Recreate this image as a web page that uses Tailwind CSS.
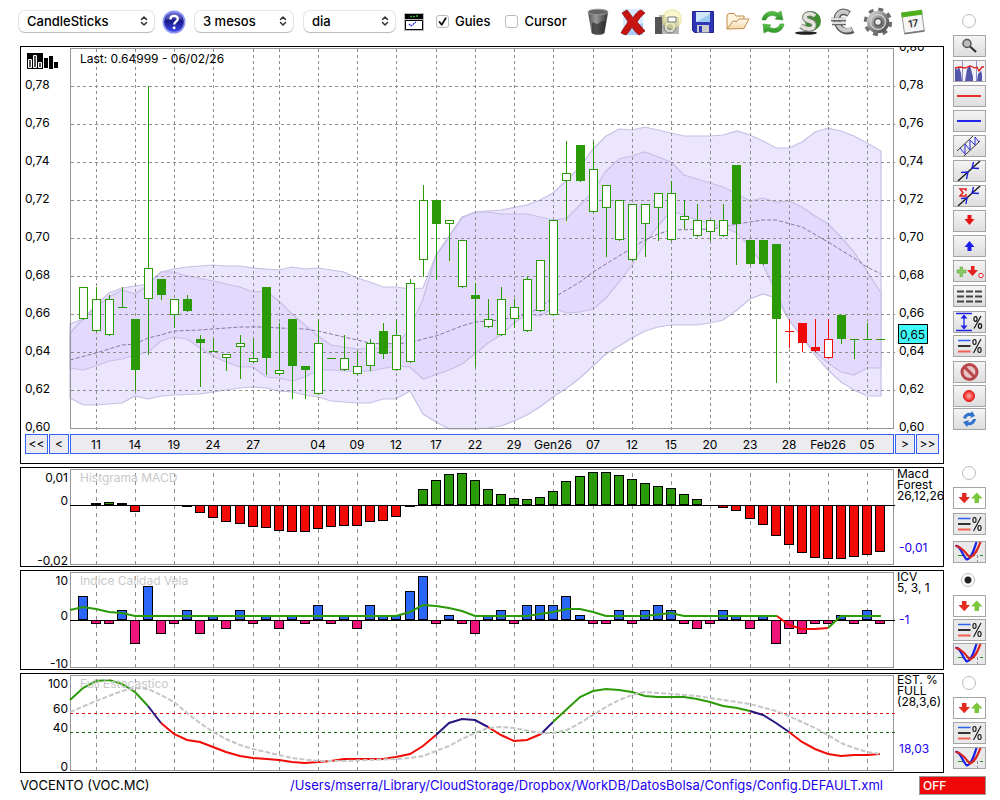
<!DOCTYPE html>
<html lang="ca">
<head>
    <meta charset="UTF-8">
    <meta name="viewport" content="width=device-width, initial-scale=1.0">
    <script src="https://cdn.jsdelivr.net/npm/@tailwindcss/browser@4"></script>
    <title>VOCENTO (VOC.MC)</title>
</head>
<body class="bg-white text-black font-[Inter,'Liberation_Sans',sans-serif] text-xs">
    <!-- shared icons -->
    <svg class="absolute w-0 h-0">
        <defs>
            <symbol id="updown" viewBox="0 0 8 12"><path d="M1.500 4.500 4 2l2.500 2.500M1.500 7.500 4 10l2.500-2.500" fill="none" stroke="#333" stroke-width="1.500" stroke-linecap="round" stroke-linejoin="round"/></symbol>
            <symbol id="arrows" viewBox="0 0 31 20">
                <path d="M8 5h4.500v4H16l-5.750 6.200L4.500 9H8z" fill="#e32b20"/>
                <path d="M20.500 15H25v-4.500h3.500l-5.750-6-5.750 6h3.500z" fill="#7cc63c"/>
            </symbol>
            <symbol id="levels" viewBox="0 0 31 20">
                <path d="M4 4.500h12.500" stroke="#2a62f0" stroke-width="1.500"/>
                <path d="M4 10h12.500" stroke="#111" stroke-width="1.700"/>
                <path d="M4 15.500h12.500" stroke="#f3604f" stroke-width="2"/>
                <g fill="none" stroke="#111" stroke-width="1.100"><ellipse cx="20.500" cy="6" rx="1.600" ry="2.500"/><ellipse cx="25.500" cy="14" rx="1.600" ry="2.500"/><path d="m27 3-7.500 14"/></g>
            </symbol>
            <symbol id="cross" viewBox="0 0 31 20">
                <path d="M4 13.500h25" stroke="#2f8a2a" stroke-dasharray="6 2 1 2"/>
                <path d="M23.500 13v7" stroke="#889" stroke-dasharray="3 2"/>
                <path d="M1.500 4C6 2 9 15 13 17.500 18 16 20 7 22.500 0" fill="none" stroke="#1a22e6" stroke-width="2.200"/>
                <path d="M1.500 4C8 4 12 12 16 15.500 22 13 24 6 26.500 0" fill="none" stroke="#dd2520" stroke-width="2.200"/>
            </symbol>
            <linearGradient id="gBlue" x1="0" y1="0" x2="0" y2="1"><stop offset="0" stop-color="#3f46c8"/><stop offset=".45" stop-color="#1a1a8c"/><stop offset="1" stop-color="#3b45e8"/></linearGradient>
            <linearGradient id="gBin" x1="0" x2="1"><stop offset="0" stop-color="#555"/><stop offset=".4" stop-color="#999"/><stop offset="1" stop-color="#333"/></linearGradient>
            <linearGradient id="gGreen" x1="0" y1="0" x2="0" y2="1"><stop offset="0" stop-color="#5cc44a"/><stop offset="1" stop-color="#2c8f2a"/></linearGradient>
            <linearGradient id="gMetal" x1="0" y1="0" x2="1" y2="1"><stop offset="0" stop-color="#ccc"/><stop offset=".5" stop-color="#888"/><stop offset="1" stop-color="#555"/></linearGradient>
            <linearGradient id="gFolder" x1="0" y1="0" x2="0" y2="1"><stop offset="0" stop-color="#fffaf0"/><stop offset="1" stop-color="#f6d9a8"/></linearGradient>
            <radialGradient id="gRec"><stop offset="0" stop-color="#ffb0a8"/><stop offset="1" stop-color="#f01818"/></radialGradient>
        </defs>
    </svg>

    <div class="flex">
        <div class="flex-1 min-w-0">
            <header class="flex items-center h-[43px] pl-[19px] mb-[3px] text-[13px] font-medium">
                <div class="relative w-[135px]">
                    <select aria-label="Tipus de gràfic" class="appearance-none w-full h-[21px] pl-2 rounded-md bg-white shadow-[0_0_1px_1px_#0000001a,0_1px_1px_#0003]"><option>CandleSticks</option></select>
                    <svg class="absolute right-1.5 top-1 w-2 h-3 pointer-events-none"><use href="#updown"/></svg>
                </div>
                <button aria-label="Ajuda" class="ml-2 w-6 h-6">
                    <svg viewBox="0 0 24 24" class="w-6 h-6"><circle cx="12" cy="12" r="11.500" fill="#8d95f2"/><circle cx="12" cy="12" r="9.800" fill="url(#gBlue)"/><path d="M4 10a8 8 0 0 1 16 0c-4-2-12-2-16 0z" fill="#fff" opacity=".2"/><path d="M8.500 9.500C8.500 4.500 16 5 15.800 9c-.2 2.500-3.600 2.800-3.600 5.500" fill="none" stroke="#fff" stroke-width="2.400"/><circle cx="12.100" cy="17.800" r="1.500" fill="#fff"/></svg>
                </button>
                <div class="relative w-[98px] ml-[9px]">
                    <select aria-label="Període" class="appearance-none w-full h-[21px] pl-2 rounded-md bg-white shadow-[0_0_1px_1px_#0000001a,0_1px_1px_#0003]"><option>3 mesos</option></select>
                    <svg class="absolute right-1.5 top-1 w-2 h-3 pointer-events-none"><use href="#updown"/></svg>
                </div>
                <div class="relative w-[91px] ml-[11px]">
                    <select aria-label="Interval" class="appearance-none w-full h-[21px] pl-2 rounded-md bg-white shadow-[0_0_1px_1px_#0000001a,0_1px_1px_#0003]"><option>dia</option></select>
                    <svg class="absolute right-1.5 top-1 w-2 h-3 pointer-events-none"><use href="#updown"/></svg>
                </div>
                <button aria-label="Finestra" class="ml-[9px] w-5 h-[18px]">
                    <svg viewBox="0 0 20 18" class="w-5 h-[18px]"><path d="M0 0h20v18H0z" fill="#bbb"/><path d="M1 1h18v5H1z"/><path d="M6 3.500h2m1 0h2m1-.500h2" stroke="#2fae2f" stroke-width="1.500"/><path d="M1.500 7.500h17v9h-17z" fill="#fff" stroke="#000"/><path d="m5 11 2 2 5-4" fill="none" stroke="#2222ee" stroke-width="1.200" stroke-dasharray="2 .6"/></svg>
                </button>
                <label class="flex items-center ml-3 gap-1.5">
                    <input type="checkbox" checked class="appearance-none size-[13px] border border-[#bbb] rounded-[3px] bg-white">
                    <svg viewBox="0 0 13 13" class="absolute size-[13px] pointer-events-none"><path d="m3.500 7 2.200 2.800L9.700 3.300" fill="none" stroke="#111" stroke-width="1.800" stroke-linecap="round" stroke-linejoin="round"/></svg>
                    Guies
                </label>
                <label class="flex items-center ml-[15px] gap-1.5">
                    <input type="checkbox" class="appearance-none size-[13px] border border-[#bbb] rounded-[3px] bg-white">
                    Cursor
                </label>
                <div class="flex items-center ml-3.5">
                    <button aria-label="Paperera" class="w-[35px] flex justify-center"><svg viewBox="0 0 22 28" class="w-[22px] h-7"><path d="M1 4.500 4.500 25c2 2.500 11 2.500 13 0L21 4.500z" fill="url(#gBin)"/><path d="M5 15c3-2 4 3 7 0s5-1 7-2l-2 12c-3 2-9 2-12 0z" fill="#222" opacity=".6"/><ellipse cx="11" cy="4" rx="10" ry="2.800" fill="#666" stroke="#999"/></svg></button>
                    <button aria-label="Esborrar" class="w-[35px] flex justify-center"><svg viewBox="0 0 26 28" class="w-[26px] h-7"><path d="M3 1h20v26H3z" fill="#a9cdf8"/><path d="M3 1h20v14L3 22z" fill="#d8eaff"/><path d="m2 5 5-3c2 2 4 5 6 8 2-4 5-7 8-8l4 3c-4 3-6 6-8 9l8 9-6 4c-3-2-5-5-7-8-2 3-4 6-6 8l-5-2c2-4 5-8 7-11-2-4-4-6-6-9z" fill="#c8150f" stroke="#8b0b0b" stroke-width=".8"/></svg></button>
                    <button aria-label="Captura" class="w-[35px] flex justify-center"><svg viewBox="0 0 28 28" class="w-7 h-7"><path d="M1 9h4V7h6v2h14v17H1z" fill="#b5b5b2"/><path d="M1 9h7v17H1z" fill="#555"/><circle cx="16" cy="19" r="6" fill="#d8d8d0" stroke="#777"/><circle cx="16" cy="19" r="3" fill="#888"/><circle cx="18" cy="11" r="9" fill="#f7f3b0" stroke="#e6e08a" stroke-width="2" opacity=".6"/><path d="M14 9h8v5h-8z" fill="#fff" stroke="#777"/></svg></button>
                    <button aria-label="Desar" class="w-[35px] flex justify-center"><svg viewBox="0 0 22 22" class="size-[22px]"><path d="M.5.500h21v21H2.500l-2-2z" fill="#2f35b5" stroke="#1e2290"/><path d="M4 1h14v10H4z" fill="#cfe6fb"/><path d="m4 11 14-8v8z" fill="#9cc9f2"/><path d="M5 14h12v7.500H5z" fill="#ccc"/><path d="M7 15h3v6H7z" fill="#2f35b5"/></svg></button>
                    <button aria-label="Obrir" class="w-[35px] flex justify-center"><svg viewBox="0 0 24 20" class="w-6 h-5"><path d="M1 17V3l2-1.500h5L10 4h8v4" fill="#fff4de" stroke="#c08a4a"/><path d="M1 17 7 9l4 .5 2-2.500h10l-5 9.500z" fill="url(#gFolder)" stroke="#c08a4a" stroke-linejoin="round"/></svg></button>
                    <button aria-label="Refrescar" class="w-[35px] flex justify-center"><svg viewBox="0 0 24 24" class="size-6"><path d="M1 10C2 3 9-1 17 3l3-2 2 9-8-1 2-2C11 4 6 6 5 10z" fill="url(#gGreen)" stroke="#3a9a30" stroke-width=".6"/><path d="M23 14c-1 7-8 11-16 7l-4 2-1-9 8 1-2 2c5 3 10 1 11-3z" fill="url(#gGreen)" stroke="#3a9a30" stroke-width=".6"/></svg></button>
                    <button aria-label="Dòlar" class="w-[35px] flex justify-center"><svg viewBox="0 0 28 28" class="w-7 h-7"><ellipse cx="12" cy="25" rx="11" ry="1.800" fill="#222"/><circle cx="17" cy="13" r="10" fill="#3f8f2f"/><path d="M8 21C3 12 10 3 18 3c-7 4-9 12-4 20z" fill="#eee"/><path d="M21 8c-4-4-11-2-10 2s9 2 9 7-8 5-13 1" fill="none" stroke="#777" stroke-width="5.500"/><path d="M21 8c-4-4-11-2-10 2s9 2 9 7-8 5-13 1" fill="none" stroke="#e2e4da" stroke-width="3.600"/></svg></button>
                    <button aria-label="Euro" class="w-[35px] flex justify-center"><svg viewBox="0 0 28 28" class="w-7 h-7"><path d="M20 6C13 1 7 6 8 13s7 13 16 9" fill="none" stroke="#555" stroke-width="6.500"/><path d="M19.500 5.500C12 1 7 6 8 13s7 12 15 8" fill="none" stroke="#c9c9cc" stroke-width="4.200"/><path d="M2 11.500h15M3 15.500h14" stroke="#66666a" stroke-width="3.400"/><path d="M2 11h15M3 15h14" stroke="#ddd" stroke-width="1.800"/></svg></button>
                    <button aria-label="Configuració" class="w-[35px] flex justify-center"><svg viewBox="0 0 30 30" class="size-[30px]"><circle cx="15" cy="15" r="12" fill="none" stroke="#6d6d6d" stroke-width="4.500" stroke-dasharray="4.700 4.720"/><circle cx="15" cy="15" r="7.500" fill="none" stroke="url(#gMetal)" stroke-width="7.500"/><circle cx="15" cy="15" r="7.500" fill="none" stroke="#ccc" stroke-width="1.500"/><circle cx="15" cy="15" r="3.500" fill="#eee" stroke="#555" stroke-width="1.500"/></svg></button>
                    <button aria-label="Calendari" class="w-[35px] flex justify-center"><svg viewBox="0 0 26 26" class="size-[26px]"><g transform="rotate(-8 13 13)"><path d="M3 3h20v20H3z" fill="#f6f6f6" stroke="#999"/><path d="M3 23.500h20" stroke="#777" stroke-width="1.500"/><path d="M2.500 2h21v5h-21z" fill="#4fae1c"/><text x="13" y="18" text-anchor="middle" font-size="10" font-weight="600" fill="#333">17</text></g></svg></button>
                </div>
            </header>

            <main class="flex flex-col gap-[3px] pl-5">
                <section class="border border-black">
                    <svg id="price" viewBox="21 47 922 387" class="block w-full h-auto"></svg>
                    <div class="flex gap-px px-1 mb-[9px] h-5">
                        <button class="w-[23px] border border-[#2f62f0] bg-[#ebebf0]">&lt;&lt;</button>
                        <button class="w-5 border border-[#2f62f0] bg-[#ebebf0]">&lt;</button>
                        <div class="flex-1 border border-[#2f62f0] bg-[#ebebf0]">
                            <svg id="dates" viewBox="71 435 822 18" class="block w-full h-auto"></svg>
                        </div>
                        <button class="w-5 border border-[#2f62f0] bg-[#ebebf0]">&gt;</button>
                        <button class="w-[23px] border border-[#2f62f0] bg-[#ebebf0]">&gt;&gt;</button>
                    </div>
                </section>
                <section class="border border-black"><svg id="macd" viewBox="21 468 922 98" class="block w-full h-auto"></svg></section>
                <section class="border border-black"><svg id="icv" viewBox="21 571 922 98" class="block w-full h-auto"></svg></section>
                <section class="border border-black"><svg id="stoch" viewBox="21 674 922 98" class="block w-full h-auto"></svg></section>
            </main>
        </div>

        <aside class="w-14 pl-[9px] pt-3.5">
            <div class="flex flex-col w-[33px] gap-[3px] [&>button]:h-[22px] [&>button]:border [&>button]:border-[#a5a5a5] [&>button]:bg-linear-to-b [&>button]:from-[#f4f4f4] [&>button]:to-[#dedede] [&_svg]:block [&_svg]:w-[31px] [&_svg]:h-5">
                <input type="radio" name="panel" aria-label="Preu" class="appearance-none size-3.5 border border-[#bbb] rounded-full ml-[9px] mb-1">
                <button aria-label="Lupa"><svg viewBox="0 0 31 20"><circle cx="13" cy="7.500" r="4" fill="#bbb" stroke="#555" stroke-width="1.500"/><path d="m16 10.500 6 5.500" stroke="#333" stroke-width="2.200"/></svg></button>
                <button aria-label="Volum"><svg viewBox="0 0 31 20"><path d="M0 0h31v20H0z" fill="#f4f2f8"/><path d="M1 20V6l2 3 2-3 2 6 1 8zM11 20l2-12 3-4 3 12v4zM23 20l1-7 3-3 1 3v7z" fill="#5156a8"/><path d="M8.500 0v20M22.500 0v20" stroke="#8d90cc"/><path d="m1 7 5-1 5 1 5-2 5 2 2-1 2 4 3-4h2" fill="none" stroke="#e02020" stroke-width="1.300"/></svg></button>
                <button aria-label="Línia vermella"><svg viewBox="0 0 31 20"><path d="M3 10h24" stroke="#e22f2f" stroke-width="2"/></svg></button>
                <button aria-label="Línia blava"><svg viewBox="0 0 31 20"><path d="M3 10h24" stroke="#2424ee" stroke-width="2"/></svg></button>
                <button aria-label="Canal"><svg viewBox="0 0 31 20"><path d="M3 15 19 0M10 20 26 5" stroke="#333"/><path d="m6 12 5 6V8l5 6V4l5 5V1l4 5" fill="none" stroke="#3030d8"/></svg></button>
                <button aria-label="Tendència"><svg viewBox="0 0 31 20"><path d="M4 20 26 0" stroke="#111" stroke-width="1.300"/><path d="m7 11.500 7-.5-1.500 7M25 7.500l-7-.5L19.500 1" fill="none" stroke="#2020dd" stroke-width="1.400"/></svg></button>
                <button aria-label="Tendència sumada"><svg viewBox="0 0 31 20"><path d="M4 20 26 0" stroke="#111" stroke-width="1.300"/><path d="m7 12.500 6-.5-1 6M25 7.500l-7-.5L19.500 1" fill="none" stroke="#2020dd" stroke-width="1.400"/><path d="M12 5V3H6l3 3.500L6 10h6V8" fill="none" stroke="#e02020" stroke-width="1.500"/></svg></button>
                <button aria-label="Baixista"><svg viewBox="0 0 31 20"><path d="M13.500 4h4v4h3l-5 6-5-6h3z" fill="#e81313"/></svg></button>
                <button aria-label="Alcista"><svg viewBox="0 0 31 20"><path d="M13.500 15h4v-4h3l-5-6-5 6h3z" fill="#2020ee"/></svg></button>
                <button aria-label="Senyals"><svg viewBox="0 0 31 20"><path d="M6 6h2.500v3H12v3H8.500v3.500H6V12H3V9h3z" fill="#8ac968" stroke="#5da83e" stroke-width=".6"/><path d="M17 5h3.500v4H24l-5.500 6L13 9h4z" fill="#e32020"/><circle cx="27" cy="14.500" r="2.200" fill="#fff" stroke="#e32020"/></svg></button>
                <button aria-label="Traços" class="mb-px"><svg viewBox="0 0 31 20"><path d="M3 5.500h25M3 10.500h25M3 15.500h25" stroke="#444" stroke-width="2" stroke-dasharray="7 2"/></svg></button>
                <button aria-label="Rang percentual" class="-mb-px"><svg viewBox="0 0 31 20"><path d="M2 1.500h16M2 18.500h16M10 3v14" stroke="#2222e6" stroke-width="1.300"/><path d="m6.500 6.500 3.500-4 3.500 4zM6.500 13.500l3.500 4 3.500-4z" fill="#2222e6"/><g fill="none" stroke="#111" stroke-width="1.200"><ellipse cx="21.500" cy="7" rx="1.600" ry="2.300"/><ellipse cx="26" cy="14" rx="1.600" ry="2.300"/><path d="m27 4-7 12.500"/></g></svg></button>
                <button aria-label="Nivells" class="mb-px"><svg><use href="#levels"/></svg></button>
                <button aria-label="Prohibit" class="-mb-px"><svg viewBox="0 0 31 20"><circle cx="15.500" cy="10" r="7.500" fill="#e8c4c4" stroke="#b8474b" stroke-width="3"/><path d="m10.500 5 10 10" stroke="#b8474b" stroke-width="3"/></svg></button>
                <button aria-label="Gravar" class="-mb-0.5"><svg viewBox="0 0 31 20"><circle cx="15" cy="10" r="5.500" fill="url(#gRec)" stroke="#e02020"/></svg></button>
                <button aria-label="Recarregar"><svg viewBox="0 0 31 20"><path d="M9 9c1-4 5-6 8-5l1-2 3 5-5 2 1-2c-3 0-4 0-5 3zM22 10c-1 5-5 7-8 6l-1 2-4-5 6-2-1 2c3 1 4-1 5-3z" fill="#2f73cc"/></svg></button>
            </div>
            <div class="flex flex-col w-[33px] gap-1 mt-9 [&>button]:h-[22px] [&>button]:border [&>button]:border-[#a5a5a5] [&>button]:bg-[#e9e9e9] [&_svg]:block [&_svg]:w-[31px] [&_svg]:h-5">
                <input type="radio" name="panel" aria-label="MACD" class="appearance-none size-3.5 border border-[#bbb] rounded-full ml-[9px] mb-[3px]">
                <button aria-label="Senyals MACD" class="bg-white!"><svg><use href="#arrows"/></svg></button>
                <button aria-label="Nivells MACD" class="mb-0.5"><svg><use href="#levels"/></svg></button>
                <button aria-label="Creuaments MACD"><svg><use href="#cross"/></svg></button>
            </div>
            <div class="flex flex-col w-[33px] gap-0.5 mt-2.5 [&>button]:h-[22px] [&>button]:border [&>button]:border-[#a5a5a5] [&>button]:bg-[#e9e9e9] [&_svg]:block [&_svg]:w-[31px] [&_svg]:h-5">
                <input type="radio" name="panel" checked aria-label="ICV" class="appearance-none size-3.5 border border-[#bbb] rounded-full ml-2 mb-1.5 bg-[radial-gradient(#222_0_3px,#fff_4px)]">
                <button aria-label="Senyals ICV" class="bg-white!"><svg><use href="#arrows"/></svg></button>
                <button aria-label="Nivells ICV"><svg><use href="#levels"/></svg></button>
                <button aria-label="Creuaments ICV"><svg><use href="#cross"/></svg></button>
            </div>
            <div class="flex flex-col w-[33px] gap-[3px] mt-[11px] [&>button]:h-[22px] [&>button]:border [&>button]:border-[#a5a5a5] [&>button]:bg-[#e9e9e9] [&_svg]:block [&_svg]:w-[31px] [&_svg]:h-5">
                <input type="radio" name="panel" aria-label="Estocàstic" class="appearance-none size-3.5 border border-[#bbb] rounded-full ml-[9px] mb-1">
                <button aria-label="Senyals estocàstic" class="bg-white!"><svg><use href="#arrows"/></svg></button>
                <button aria-label="Nivells estocàstic"><svg><use href="#levels"/></svg></button>
                <button aria-label="Creuaments estocàstic"><svg><use href="#cross"/></svg></button>
            </div>
        </aside>
    </div>

    <footer class="flex items-center pl-5 pr-3.5 pt-[3px] text-[13px]">
        <span>VOCENTO (VOC.MC)</span>
        <a href="#" class="ml-auto text-[#1a00f0]">/Users/mserra/Library/CloudStorage/Dropbox/WorkDB/DatosBolsa/Configs/Config.DEFAULT.xml</a>
        <button class="ml-9 w-[67px] h-[19px] pl-[3px] border border-[#999] bg-[#f00808] text-white text-left text-xs font-medium">OFF</button>
    </footer>

    <script>
      const GREEN = '#2a9a06', RED = '#f20a06'
      const X = i => Math.floor(70 + 13.077 * i)
      const ticks = [2, 5, 8, 11, 14, 16, 19, 22, 25, 28, 31, 34, 37, 40, 43, 46, 49, 52, 55, 58, 61]
      const days = ['11', '14', '19', '24', '27', '', '04', '09', '12', '17', '22', '29', 'Gen26', '07', '12', '15', '20', '23', '28', 'Feb26', '05']

      const put = (id, html) => { document.querySelector(id).innerHTML = html }
      const text = (x, y, s, extra = '') => `<text x="${x}" y="${y}" font-size="12" ${extra}>${s}</text>`
      const line = (pts, color, extra = '') => `<polyline points="${pts}" fill="none" stroke="${color}" ${extra}/>`
      const frame = (y1, y2) => `<rect x="70.5" y="${y1 + 0.5}" width="823" height="${y2 - y1}" fill="none" stroke="#969696"/>`
      const vgrid = (y1, y2, dash) => ticks.map(i => `<path d="M${X(i) + 0.5} ${y1}V${y2}" stroke="#8e8e8e" stroke-dasharray="${dash}"/>`).join('')

      // high, top, bottom, low, kind (h hollow, f filled, R red filled, H red hollow)
      const candles = [
        [287,287,319,320,'h'],[287,299,331,332,'h'],[295,299,335,336,'h'],[287,307,308,308,'f'],[319,319,370,391,'f'],
        [86,268,299,355,'h'],[279,279,295,300,'f'],[299,299,315,328,'h'],[295,299,311,312,'f'],[335,339,343,387,'f'],
        [339,351,352,352,'f'],[354,354,358,371,'h'],[335,343,347,379,'h'],[339,358,362,363,'h'],[287,287,358,375,'f'],
        [323,370,374,375,'h'],[319,319,366,399,'f'],[366,366,370,399,'f'],[319,343,394,395,'h'],[358,358,359,359,'f'],
        [335,358,370,371,'h'],[351,366,374,375,'h'],[339,343,366,371,'h'],[323,331,354,359,'f'],[319,335,370,371,'h'],
        [279,283,362,363,'h'],[185,200,260,277,'h'],[200,200,224,280,'f'],[220,220,224,261,'h'],[240,240,287,288,'h'],
        [283,295,299,367,'f'],[299,319,327,328,'h'],[287,299,335,336,'h'],[299,307,319,328,'h'],[276,279,331,332,'h'],
        [260,260,311,312,'h'],[220,220,315,316,'h'],[141,173,181,221,'h'],[145,145,181,182,'f'],[141,169,212,213,'h'],
        [185,185,208,257,'h'],[200,200,240,241,'h'],[204,204,260,261,'h'],[204,204,224,257,'h'],[193,193,208,241,'h'],
        [181,193,240,241,'h'],[200,216,220,229,'h'],[204,220,236,237,'h'],[220,220,232,241,'h'],[204,220,236,237,'h'],
        [165,165,224,265,'f'],[240,240,264,265,'f'],[240,240,264,265,'f'],[244,244,319,383,'f'],[319,331,332,348,'R'],
        [323,323,343,352,'R'],[319,347,351,352,'R'],[319,339,358,359,'H'],[315,315,339,344,'f'],[339,339,340,359,'f'],
        [323,339,340,340,'f'],[339,339,340,340,'f']
      ]
      const drawCandle = ([hi, top, bot, lo, kind], n) => {
        const x = X(n + 1)
        const color = 'RH'.includes(kind) ? RED : GREEN
        const body = 'hH'.includes(kind)
          ? `<rect x="${x - 3.5}" y="${top + 0.5}" width="8" height="${bot - top - 1}" fill="#fff" stroke="${color}"/>`
          : `<rect x="${x - 4}" y="${top}" width="9" height="${bot - top}" fill="${color}"/>`
        return `<path d="M${x + 0.5} ${hi}V${lo}" stroke="${color}"/>${body}`
      }

      const outerTop = '70,324 83,319 96,305 109,293 122,288 135,286 148,284 161,272 174,269 187,267 213,265 226,266 240,266 253,268 279,270 292,267 305,269 318,268 331,270 344,272 357,278 370,282 383,287 396,287 410,289 423,288 436,255 449,236 462,217 475,212 501,210 527,205 540,200 553,193 567,180 580,167 593,149 606,136 619,129 632,130 645,127 658,130 671,133 684,136 710,136 723,135 737,131 750,135 763,141 776,148 789,148 802,142 815,132 828,128 841,131 854,136 867,143 881,151'
      const outerBot = '70,398 83,405 96,405 109,404 122,403 135,396 148,399 161,396 174,395 200,394 213,392 226,390 240,388 253,387 266,388 279,391 292,392 305,395 318,397 331,401 344,402 357,403 370,403 383,399 396,399 410,391 423,414 436,422 449,429 475,429 488,428 501,426 514,421 527,415 540,407 553,397 567,388 580,378 593,366 606,354 619,346 632,338 645,331 658,327 671,325 697,325 710,323 723,320 737,310 750,299 763,294 776,298 789,320 802,337 815,355 828,370 841,382 854,390 867,396 881,396'
      const innerTop = '70,333 83,319 96,307 109,297 122,290 135,294 148,285 161,272 174,272 187,276 213,281 240,287 253,292 266,291 279,301 292,314 305,325 318,336 331,345 344,347 357,349 383,348 396,345 410,329 423,299 436,256 449,237 462,218 475,212 488,212 501,214 527,214 540,217 553,220 567,218 580,205 593,192 606,171 619,159 632,156 645,152 658,157 671,162 684,175 697,179 723,187 737,194 750,201 763,198 776,202 789,201 802,207 815,216 828,224 841,237 854,252 867,271 881,293'
      const innerBot = '70,368 83,370 96,366 109,361 122,359 135,355 148,352 161,341 174,337 187,339 200,348 213,356 226,362 240,367 253,367 266,377 279,378 292,381 305,377 318,370 331,370 344,371 370,371 396,366 410,367 423,379 449,370 462,364 475,354 488,343 501,335 514,323 527,314 540,316 553,308 567,313 580,312 593,309 606,298 619,282 632,265 645,243 658,226 671,211 684,215 697,220 723,227 737,233 750,247 763,265 776,292 789,320 802,337 815,352 828,363 841,372 854,375 867,368 881,368'
      const middle = '70,360 96,353 122,345 135,344 148,338 161,335 174,331 200,330 213,329 240,327 266,327 279,328 305,329 318,331 344,337 370,343 383,344 410,343 423,339 436,336 462,326 475,322 501,320 514,317 527,315 540,307 553,298 580,282 593,272 632,248 645,240 658,234 671,230 710,229 723,227 737,224 763,220 776,220 802,227 828,242 854,258 867,267 881,274'
      const band = (a, b, fill) => `<polygon points="${a} ${b.split(' ').reverse().join(' ')}" fill="${fill}" stroke="#c6bfe4" stroke-width="1.200"/>`

      let grid = '', labels = text(899, 51, '0,80')
      for (let n = 0; n < 10; n++) {
        const y = 428 - n * 38
        const v = (0.6 + n * 0.02).toFixed(2).replace('.', ',')
        if (n > 0) grid += `<path d="M71 ${y + 0.5}H895" stroke="#8e8e8e" stroke-dasharray="3 3"/>`
        labels += text(25, y + 3, v) + text(899, y + 3, v)
      }
      put('#price',
        band(outerTop, outerBot, '#ebe5fe') + band(innerTop, innerBot, '#e3d9fd') +
        grid + vgrid(49, 430, '3 3') + frame(48, 428) +
        line(middle, '#85799f', 'stroke-dasharray="4 2"') +
        candles.map(drawCandle).join('') + labels +
        text(80, 63, 'Last: 0.64999 - 06/02/26') +
        '<rect x="898.5" y="324.5" width="29" height="19" fill="#40fcfc" stroke="#000"/>' + text(900, 339, '0,65') +
        // chart type toggle
        '<path d="M27 53h16v16H27zM44 58h4v10h-4zM49 56h4v13h-4zM54 62h4v6h-4z"/>' +
        '<path d="M28.500 59.500h3v8h-3zM33.500 55.500h3v12h-3zM38.500 62.500h3v5h-3z" fill="#555" stroke="#fff"/>')
      put('#dates', ticks.map((i, n) => text(X(i), 449, days[n], 'text-anchor="middle"')).join(''))

      const bar = (i, y, zero, up, down) => {
        const top = Math.min(y, zero), h = Math.abs(y - zero)
        return `<rect x="${X(i) - 4.5}" y="${top + 0.5}" width="9" height="${Math.max(h - 1, 0)}" fill="${y < zero ? up : down}" stroke="#000"/>`
      }
      // pixel level of each bar, 0 = no bar
      const macd = [0,503,502,503,512,0,0,0,507,513,518,522,524,527,528,531,532,532,529,527,526,526,522,521,517,507,489,480,474,473,480,489,494,498,499,497,491,481,476,472,472,475,479,483,486,488,494,499,504,508,511,519,525,536,545,553,558,559,559,557,555,552]
      put('#macd', frame(469, 564) + vgrid(473, 566, '4 4') +
        macd.map((y, n) => y ? bar(n + 1, y, 505, GREEN, RED) : '').join('') +
        '<path d="M70 505.500H895" stroke="#000"/>' +
        text(80, 482, 'Histgrama MACD', 'fill="#c8c8c8"') +
        text(68, 482, '0,01', 'text-anchor="end"') + text(68, 505, '0', 'text-anchor="end"') + text(68, 565, '-0,02', 'text-anchor="end"') +
        text(897, 478, 'Macd') + text(897, 489, 'Forest') + text(897, 500, '26,12,26') + text(899, 552, '-0,01', 'fill="#1a00f0"'))

      const icv = [596,624,624,610,644,586,634,624,610,634,615,629,610,624,615,629,615,624,605,624,615,629,605,615,615,591,576,624,615,624,634,615,610,624,605,605,605,596,615,624,624,610,624,610,605,610,624,629,624,610,615,629,615,644,629,634,624,624,615,624,610,624]
      put('#icv', frame(572, 667) + vgrid(576, 669, '4 4') +
        icv.map((y, n) => bar(n + 1, y, 620, '#2a66f8', '#f0147a')).join('') +
        '<path d="M70 620.500H895" stroke="#000"/>' +
        line('70,610 83,607 96,609 109,612 122,613 135,616 396,616 410,612 423,605 436,606 449,608 462,611 475,616 527,616 540,614 553,612 567,609 580,609 593,612 606,616 645,616 671,613 684,616 777,616', GREEN, 'stroke-width="2"') +
        line('777,616 789,625 802,629 815,629 828,628', RED, 'stroke-width="2"') +
        line('828,628 841,616 881,616', GREEN, 'stroke-width="2"') +
        text(80, 585, 'Indice Calidad Vela', 'fill="#c8c8c8"') +
        text(68, 585, '10', 'text-anchor="end"') + text(68, 620, '0', 'text-anchor="end"') + text(68, 668, '-10', 'text-anchor="end"') +
        text(897, 581, 'ICV') + text(897, 592, '5, 3, 1') + text(899, 624, '-1', 'fill="#1a00f0"'))

      const slow = [
        ['70,700 83,688 96,681 109,680 122,684 135,692 148,706', GREEN],
        ['148,706 161,723', '#2c1480'],
        ['161,723 174,734 187,740 200,742 213,747 226,752 240,756 253,758 279,760 292,762 305,763 318,762 331,761 344,759 383,759 396,757 410,754 423,746 436,735', RED],
        ['436,735 449,723 462,719 475,720 488,727', '#2c1480'],
        ['488,727 501,735 514,741 527,740 541,734', RED],
        ['541,734 553,722', '#2c1480'],
        ['553,722 567,709 580,697 593,691 606,689 619,690 632,692 645,696 658,697 684,697 697,699 710,702 723,706 737,708 750,711', GREEN],
        ['750,711 763,715 776,723 789,732', '#2c1480'],
        ['789,732 802,742 815,749 828,754 841,756 854,755 867,755 880,754', RED]
      ]
      put('#stoch', frame(675, 770) + vgrid(679, 772, '4 4') +
        '<path d="M70 713.500H895" stroke="#e01010" stroke-dasharray="3 3"/><path d="M70 732.500H895" stroke="#146c08" stroke-dasharray="3 3"/>' +
        slow.map(([pts, color]) => line(pts, color, 'stroke-width="2"')).join('') +
        line('70,712 96,701 122,691 135,688 148,689 161,695 174,702 187,713 200,723 213,732 226,739 240,745 253,749 279,755 292,758 318,761 344,761 370,760 396,759 410,758 423,756 436,751 449,746 462,739 475,733 488,728 501,727 514,728 540,733 553,733 567,730 580,723 593,715 606,707 619,700 632,695 645,692 671,694 697,696 723,700 750,704 776,711 789,716 802,722 815,728 828,735 841,743 854,748 867,752 881,754', '#c6c6c6', 'stroke-width="2" stroke-dasharray="5 2"') +
        text(80, 688, 'Full Estocastico', 'fill="#c8c8c8"') +
        text(68, 688, '100', 'text-anchor="end"') + text(68, 713, '60', 'text-anchor="end"') + text(68, 732, '40', 'text-anchor="end"') + text(68, 771, '0', 'text-anchor="end"') +
        text(897, 684, 'EST. %') + text(897, 695, 'FULL') + text(897, 706, '(28,3,6)') + text(899, 753, '18,03', 'fill="#1a00f0"'))
    </script>
</body>
</html>
